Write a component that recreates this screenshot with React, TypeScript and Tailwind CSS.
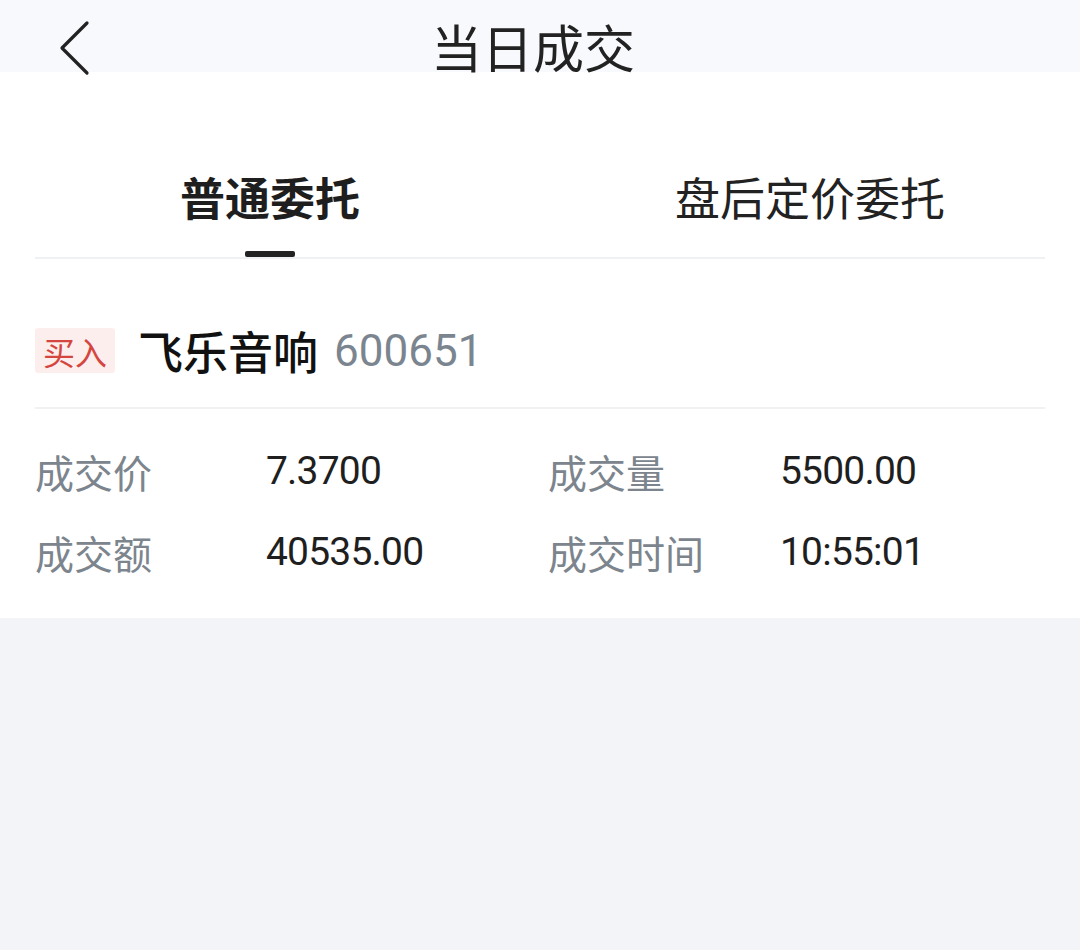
import { FC } from "react";

const cjk = { fontFamily: '"Noto Sans CJK SC", "Noto Sans", sans-serif' };
const num = { fontFamily: 'Roboto, "Noto Sans CJK SC", sans-serif' };

interface IDetail {
  label: string;
  value: string;
}

const details: IDetail[][] = [
  [
    { label: "成交价", value: "7.3700" },
    { label: "成交量", value: "5500.00" },
  ],
  [
    { label: "成交额", value: "40535.00" },
    { label: "成交时间", value: "10:55:01" },
  ],
];

const BackIcon: FC = () => (
  <svg width="34" height="56" viewBox="0 0 34 56" fill="none">
    <path d="M30 3 L5 28 L30 53" stroke="#222" strokeWidth="3.2" strokeLinecap="round" strokeLinejoin="round" />
  </svg>
);

const App: FC = () => {
  // ******************************************* Renders*******************************************//
  const renderRows = details.map((row, i) => (
    <div key={i} className="grid grid-cols-[231px_282px_232px_1fr] items-center h-[40px]">
      {row.map((d) => [
        <span key={d.label} className="text-[39px] leading-none text-[#7c858d]" style={cjk}>
          {d.label}
        </span>,
        <span key={d.value} className="text-[39px] leading-none text-[#1f1f1f] tracking-[-0.8px]" style={num}>
          {d.value}
        </span>,
      ])}
    </div>
  ));

  return (
    <div className="w-[1080px] h-[950px] bg-[#f2f4f7] flex flex-col" style={cjk}>
      {/* header */}
      <div className="relative h-[72px] bg-[#f8f9fc] flex items-start justify-center">
        <div className="absolute left-[57px] top-[20px]">
          <BackIcon />
        </div>
        <span className="mt-[21px] mr-[14px] text-[51px] leading-none text-[#222]">当日成交</span>
      </div>

      <div className="bg-white flex flex-col">
        {/* tabs */}
        <div className="flex pt-[102px]">
          <div className="flex-1 flex flex-col items-center">
            <span className="text-[45px] leading-none font-bold text-[#1e1e1e]">普通委托</span>
            <span className="mt-[32px] w-[50px] h-[6px] rounded-[2px] bg-[#222]" />
          </div>
          <div className="flex-1 flex flex-col items-center">
            <span className="text-[45px] leading-none text-[#222]">盘后定价委托</span>
            <span className="mt-[32px] w-[50px] h-[6px]" />
          </div>
        </div>
        <div className="mx-[35px] h-[2px] bg-[#f0f1f3]" />

        {/* stock */}
        <div className="flex items-center px-[35px] pt-[69px] pb-[34px]">
          <span className="w-[80px] h-[45px] rounded-[3px] bg-[#fdeeee] text-[#d4463f] text-[32px] leading-none flex items-center justify-center">
            买入
          </span>
          <span className="ml-[23px] text-[45px] leading-none font-medium text-[#111]">飞乐音响</span>
          <span className="ml-[16px] text-[44px] leading-none text-[#7b8590]" style={num}>
            600651
          </span>
        </div>
        <div className="mx-[35px] h-[2px] bg-[#f0f1f3]" />

        {/* details */}
        <div className="flex flex-col gap-[41px] px-[35px] pt-[42px] pb-[46px]">{renderRows}</div>
      </div>
    </div>
  );
};

export default App;
